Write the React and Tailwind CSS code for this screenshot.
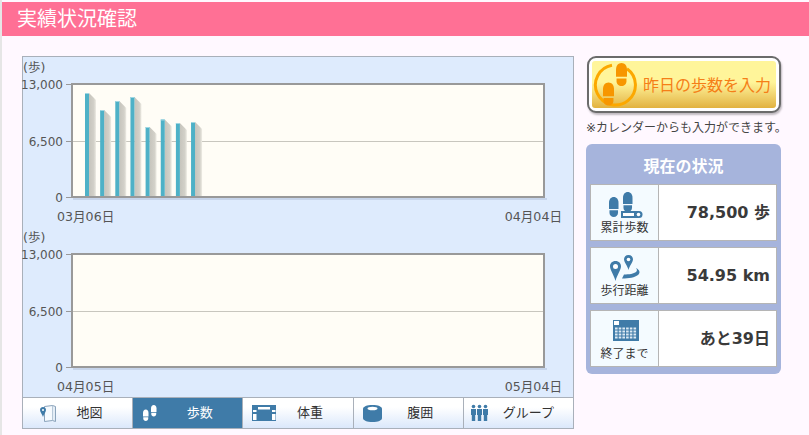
const font = { fontFamily: '"DejaVu Sans", "Noto Sans CJK JP", sans-serif' };

const barTops = [93, 110, 101, 97, 127, 119.5, 123, 122];

function Sole({ x, y, s = 1, fill = '#3f7ba8' }) {
  return (
    <g transform={`translate(${x} ${y}) scale(${s})`} fill={fill}>
      <path d="M0 6C0 2.500 2 0 5 0s5 2.500 5 6v6.500H0z" />
      <path d="M0.500 14h9v2.500C9.500 19 7.500 21 5 21S0.500 19 0.500 16.500z" />
    </g>
  );
}

function Chart({ from, to, bars = [] }) {
  return (
    <svg width="550" height="170" className="block overflow-visible" style={font}>
      <defs>
        <linearGradient id="shade" x1="0" x2="1" y1="0" y2="0">
          <stop offset="0" stopColor="#c6c4bc" />
          <stop offset="0.7" stopColor="#d3d1c9" />
          <stop offset="1" stopColor="#eeece4" />
        </linearGradient>
      </defs>
      <text x="0" y="15" fontSize="12.500" fill="#555">(歩)</text>
      <text x="40" y="32" fontSize="12" fill="#555" textAnchor="end">13,000</text>
      <text x="40" y="89" fontSize="12" fill="#555" textAnchor="end">6,500</text>
      <text x="40" y="145" fontSize="12" fill="#555" textAnchor="end">0</text>
      <rect x="50" y="141" width="474" height="2" fill="#c6d4ea" />
      <path d="M43 27.500h6M43 84.500h6M43 140.500h6" stroke="#999" />
      <rect x="49" y="27" width="472" height="113" fill="#fffdf6" stroke="#999" strokeWidth="2" />
      <rect x="50" y="84" width="470" height="1" fill="#c8c6be" />
      {bars.map((top, i) => {
        const x = 62 + i * 15.15;
        const y = top - 57;
        return (
          <g key={i}>
            <path d={`M${x + 4} ${y}L${x + 11} ${y + 7}V139H${x + 4}z`} fill="url(#shade)" />
            <rect x={x} y={y} width="4" height={139 - y} fill="#4eb1c7" />
            <rect x={x} y={y} width="4" height="1" fill="#9fd7e3" />
          </g>
        );
      })}
      <text x="34" y="164" fontSize="12.600" fill="#555">{from}</text>
      <text x="539" y="164" fontSize="12.600" fill="#555" textAnchor="end">{to}</text>
    </svg>
  );
}

function MapIcon() {
  return (
    <svg width="36" height="30" viewBox="0 0 36 30">
      <path d="M21.500 8.500l8-1v15l-8 1z" fill="#f6fafe" stroke="#8aa3bb" />
      <path d="M29.500 7.500l3 1v15l-3-1" fill="#e4edf6" stroke="#8aa3bb" />
      <path d="M20 9c-2 0-3 1.500-3 2.900 0 2 2.200 4.300 3 7.100.8-2.800 3-5.100 3-7.100C23 10.500 22 9 20 9z" fill="#3f7ba8" />
      <circle cx="20" cy="12" r="1" fill="#fff" />
    </svg>
  );
}

function StepsIcon() {
  return (
    <svg width="36" height="30" viewBox="0 0 36 30">
      <Sole x={10} y={11.500} s={0.55} fill="#fff" />
      <Sole x={18} y={7} s={0.55} fill="#fff" />
    </svg>
  );
}

function WeightIcon() {
  return (
    <svg width="36" height="30" viewBox="0 0 36 30">
      <rect x="9" y="7" width="24" height="16" fill="#3f7ba8" />
      <rect x="15" y="9" width="12" height="2.500" fill="#fff" />
      <rect x="10" y="12" width="3.500" height="2" fill="#fff" />
      <rect x="29" y="12" width="3.500" height="2" fill="#fff" />
      <rect x="10" y="16" width="3.500" height="6" fill="#fff" />
      <rect x="29" y="16" width="3.500" height="6" fill="#fff" />
    </svg>
  );
}

function WaistIcon() {
  return (
    <svg width="36" height="30" viewBox="0 0 36 30">
      <path d="M9 11c0-2.500 4-4 9.500-4S28 8.500 28 11v9c0 2.500-4 4-9.500 4S9 22.500 9 20z" fill="#3f7ba8" />
      <ellipse cx="18.500" cy="10.500" rx="5" ry="1.800" fill="#fff" />
    </svg>
  );
}

function GroupIcon() {
  const people = [7, 13, 19];
  return (
    <svg width="36" height="30" viewBox="0 0 36 30">
      {people.map((x) => (
        <g key={x} fill="#3f7ba8">
          <circle cx={x + 2.500} cy="8.500" r="1.800" />
          <path d={`M${x} 11h5v6h-.8v6h-3.400v-6H${x}z`} />
        </g>
      ))}
    </svg>
  );
}

const tabs = [
  { label: '地図', Icon: MapIcon, gap: 'mr-3' },
  { label: '歩数', Icon: StepsIcon, active: true, gap: 'mr-3' },
  { label: '体重', Icon: WeightIcon, gap: 'mr-3' },
  { label: '腹囲', Icon: WaistIcon, gap: 'mr-3' },
  { label: 'グループ', Icon: GroupIcon, gap: 'mr-4' },
];

function TotalIcon() {
  return (
    <svg width="40" height="28" viewBox="0 0 40 28">
      <Sole x={4} y={5} s={0.95} />
      <Sole x={18} y={0} s={0.95} />
      <path d="M16 19h18a3.500 3.500 0 0 1 0 7H16z" fill="#3f7ba8" />
      <rect x="18" y="21" width="11" height="3" fill="#fff" />
      <circle cx="33.500" cy="22.500" r="1.800" fill="#fff" />
    </svg>
  );
}

function DistanceIcon() {
  return (
    <svg width="40" height="28" viewBox="0 0 40 28">
      <path d="M10.500 6C7 6 5 8.500 5 11.300 5 15 9 20 10.500 26 12 20 16 15 16 11.300 16 8.500 14 6 10.500 6z" fill="#3f7ba8" />
      <circle cx="10.500" cy="11.500" r="2.500" fill="#fff" />
      <path d="M23.500 0C20.700 0 19 2 19 4.300c0 2.800 3.300 6 4.500 10.700C24.700 10.300 28 7.100 28 4.300 28 2 26.300 0 23.500 0z" fill="#3f7ba8" />
      <circle cx="23.500" cy="4.500" r="1.800" fill="#fff" />
      <path d="M31 13c4 2 4.500 5 2 7-3 2.500-9 3.500-16 3.500l2-4c5 0 10-.8 12-2.500 1.500-1.300 1-2.500 0-4z" fill="#3f7ba8" />
    </svg>
  );
}

function CalendarIcon() {
  const cells = [];
  for (let r = 0; r < 4; r++) {
    for (let c = 0; c < 6; c++) {
      cells.push(<rect key={`${r}-${c}`} x={10 + c * 3.700} y={9.500 + r * 3} width="2.600" height="2" fill="#dce9f3" />);
    }
  }
  return (
    <svg width="40" height="28" viewBox="0 0 40 28">
      <rect x="8" y="2" width="26" height="21" fill="#3f7ba8" />
      {cells}
      <rect x="9" y="3" width="5" height="4" fill="#fff" />
    </svg>
  );
}

const stats = [
  { label: '累計歩数', value: '78,500 歩', Icon: TotalIcon },
  { label: '歩行距離', value: '54.95 km', Icon: DistanceIcon },
  { label: '終了まで', value: 'あと39日', Icon: CalendarIcon },
];

export default function App() {
  return (
    <div className="h-[435px] w-[809px] overflow-hidden bg-[#fff8ff] pt-[2px] border-l-2 border-[#e6e6e6]" style={font}>
      <div className="flex h-[34px] items-center bg-[#ff7095] pl-[15px] text-[20px] leading-none text-white">
        実績状況確認
      </div>

      <div className="flex items-start gap-[12px] pl-[20px] pt-[20px]">
        <div className="w-[552px] border border-[#a9b0ba] bg-[#deebfd]">
          <Chart from="03月06日" to="04月04日" bars={barTops} />
          <Chart from="04月05日" to="05月04日" />
          <div className="flex h-[31px] border-t border-[#a9b0ba]">
            {tabs.map(({ label, Icon, active, gap }, i) => (
              <div
                key={label}
                className={`flex flex-1 items-center text-[13px] ${i > 0 ? 'border-l border-[#a9b0ba]' : ''} ${
                  active ? 'bg-[#3f7ba8] text-white' : 'bg-gradient-to-b from-white from-30% to-[#dbe8fb] text-[#333]'
                }`}
              >
                <Icon />
                <span className={`flex-1 text-center ${gap}`}>{label}</span>
              </div>
            ))}
          </div>
        </div>

        <div className="w-[197px]">
          <div className="ml-px h-[57px] w-[194px] rounded-[9px] border-2 border-[#6b6b6b] bg-white p-[3px] shadow-[1px_2px_2px_rgba(0,0,0,0.25)]">
            <div className="flex h-full items-center rounded-[3px] bg-gradient-to-b from-[#fff59a] from-45% to-[#e2b23e] pl-[1px]">
              <svg width="44" height="44" viewBox="0 0 44 44" className="shrink-0">
                <path d="M19 2.300A20 20 0 1 0 34 5.700" fill="none" stroke="#fca800" strokeWidth="3" />
                <Sole x={23} y={0} s={1.1} fill="#f79600" />
                <Sole x={10} y={19.500} s={1.1} fill="#f79600" />
              </svg>
              <span className="ml-[6px] pt-[3px] text-[16px] leading-none whitespace-nowrap text-[#f57f17]">昨日の歩数を入力</span>
            </div>
          </div>
          <p className="mt-[8px] text-[12px] leading-[14px] whitespace-nowrap text-[#444]">※カレンダーからも入力ができます。</p>

          <div className="mt-[9px] w-[195px] rounded-[6px] bg-[#a6b4dc] px-[4px] pb-[7px]">
            <div className="flex h-[40px] items-center justify-center pt-[5px] text-[16px] font-bold text-white">現在の状況</div>
            <div className="flex flex-col gap-[6px]">
              {stats.map(({ label, value, Icon }) => (
                <div key={label} className="flex h-[57px] border border-[#b5b5b5] bg-white">
                  <div className="flex w-[68px] flex-col items-center justify-center border-r border-[#b5b5b5] bg-[#f4fbff] pt-[2px]">
                    <Icon />
                    <span className="mt-[2px] text-[12px] leading-[13px] text-[#333]">{label}</span>
                  </div>
                  <div className="flex flex-1 items-center justify-end pr-[6px] text-[16px] font-bold text-[#3a3a3a]">{value}</div>
                </div>
              ))}
            </div>
          </div>
        </div>
      </div>
    </div>
  );
}
